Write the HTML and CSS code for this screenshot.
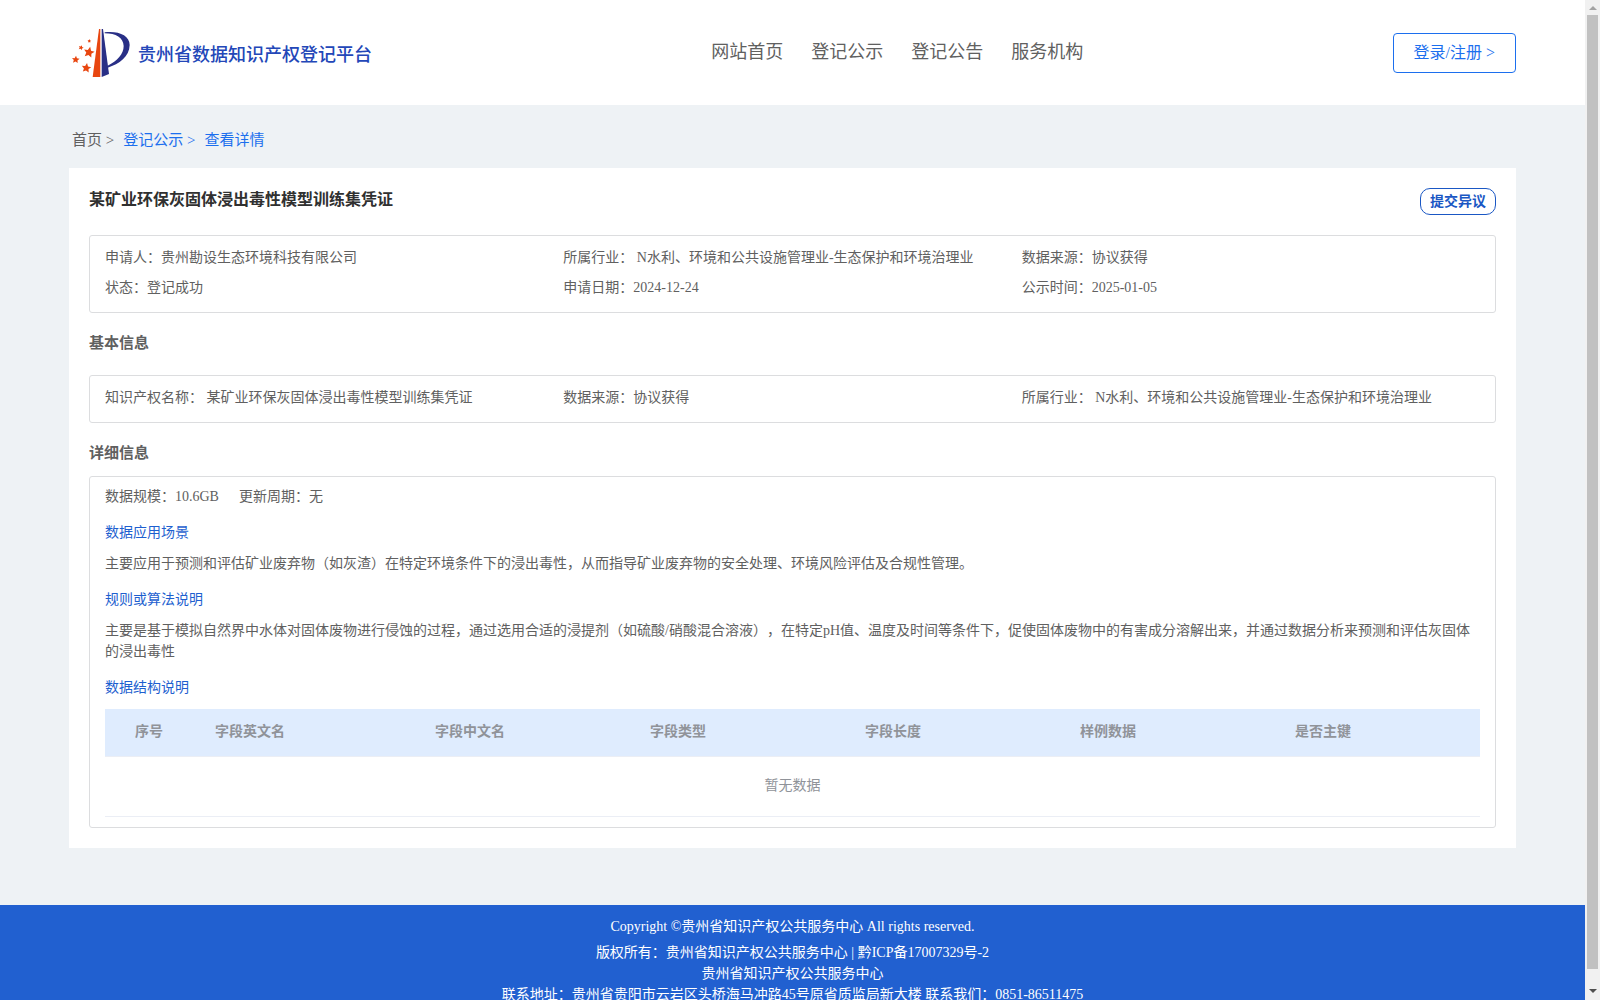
FILE: index.html
```html
<!DOCTYPE html>
<html lang="zh-CN">
<head>
    <meta charset="utf-8">
    <title>贵州省数据知识产权登记平台</title>
    <link rel="stylesheet" href="styles.css">
</head>
<body>
    <div class="page">
        <header class="header">
            <a class="logo" href="#">
                <svg width="58" height="50" viewBox="36 84 174 150" aria-hidden="true">
                    <defs>
                        <polygon id="star" points="0,-10 2.9,-3.6 9.5,-3.1 4.6,1.5 5.9,8.1 0,4.8 -5.9,8.1 -4.6,1.5 -9.5,-3.1 -2.9,-3.6"/>
                    </defs>
                    <g fill="#e84610">
                        <path d="M117 87h4v144H98z"/>
                        <use href="#star" transform="translate(87 157) rotate(12) scale(1.7)"/>
                        <use href="#star" transform="translate(79 204) rotate(8) scale(1.5)"/>
                        <use href="#star" transform="translate(47 179) rotate(5) scale(1.2)"/>
                        <use href="#star" transform="translate(63 143) rotate(20) scale(.8)"/>
                        <use href="#star" transform="translate(88 123) rotate(10) scale(.6)"/>
                    </g>
                    <g fill="#292f86">
                        <path d="M125 87h4l18 135-22 9z"/>
                        <path d="M134 97C175 92 209 106 209 135C208 170 178 192 143 203V197C172 183 191 162 191 138C190 113 168 100 134 100z"/>
                    </g>
                </svg>
                <span>贵州省数据知识产权登记平台</span>
            </a>
            <nav class="nav">
                <a href="#">网站首页</a>
                <a href="#">登记公示</a>
                <a href="#">登记公告</a>
                <a href="#">服务机构</a>
            </nav>
            <button type="button" class="login">登录/注册 &gt;</button>
        </header>

        <main class="main">
            <div class="breadcrumb">
                <a href="#" class="home">首页 &gt;</a>
                <a href="#">登记公示 &gt;</a>
                <a href="#">查看详情</a>
            </div>

            <div class="card">
                <div class="card-top">
                    <h1>某矿业环保灰固体浸出毒性模型训练集凭证</h1>
                    <button type="button" class="objection">提交异议</button>
                </div>

                <div class="box info">
                    <div>申请人：贵州勘设生态环境科技有限公司</div>
                    <div>所属行业： N水利、环境和公共设施管理业-生态保护和环境治理业</div>
                    <div>数据来源：协议获得</div>
                    <div>状态：登记成功</div>
                    <div>申请日期：2024-12-24</div>
                    <div>公示时间：2025-01-05</div>
                </div>

                <h2>基本信息</h2>
                <div class="box info basic">
                    <div>知识产权名称： 某矿业环保灰固体浸出毒性模型训练集凭证</div>
                    <div>数据来源：协议获得</div>
                    <div>所属行业： N水利、环境和公共设施管理业-生态保护和环境治理业</div>
                </div>

                <h2>详细信息</h2>
                <div class="box detail">
                    <div class="scale">
                        <span>数据规模：10.6GB</span>
                        <span>更新周期：无</span>
                    </div>
                    <h3>数据应用场景</h3>
                    <p>主要应用于预测和评估矿业废弃物（如灰渣）在特定环境条件下的浸出毒性，从而指导矿业废弃物的安全处理、环境风险评估及合规性管理。</p>
                    <h3>规则或算法说明</h3>
                    <p>主要是基于模拟自然界中水体对固体废物进行侵蚀的过程，通过选用合适的浸提剂（如硫酸/硝酸混合溶液），在特定pH值、温度及时间等条件下，促使固体废物中的有害成分溶解出来，并通过数据分析来预测和评估灰固体的浸出毒性</p>
                    <h3>数据结构说明</h3>
                    <table>
                        <thead>
                            <tr>
                                <th class="col-index">序号</th>
                                <th class="col-name">字段英文名</th>
                                <th>字段中文名</th>
                                <th>字段类型</th>
                                <th>字段长度</th>
                                <th>样例数据</th>
                                <th class="col-key">是否主键</th>
                            </tr>
                        </thead>
                        <tbody>
                            <tr>
                                <td colspan="7">暂无数据</td>
                            </tr>
                        </tbody>
                    </table>
                </div>
            </div>
        </main>

        <footer class="footer">
            <p class="copyright">Copyright ©贵州省知识产权公共服务中心 All rights reserved.</p>
            <p>版权所有：贵州省知识产权公共服务中心 | 黔ICP备17007329号-2</p>
            <p>贵州省知识产权公共服务中心</p>
            <p>联系地址：贵州省贵阳市云岩区头桥海马冲路45号原省质监局新大楼 联系我们：0851-86511475</p>
        </footer>
    </div>

    <div class="scrollbar" aria-hidden="true">
        <i class="arrow up"></i>
        <i class="thumb"></i>
        <i class="arrow down"></i>
    </div>
</body>
</html>
```
FILE: styles.css
```css
* {
    box-sizing: border-box;
}
body {
    margin: 0;
    display: flex;
    height: 100vh;
    overflow: hidden;
    font-family: "Liberation Serif", "Noto Sans CJK SC", serif;
    font-size: 14px;
    text-spacing-trim: space-all;
    color: #606060;
    background-color: #eef2f5;
}
a {
    color: inherit;
    text-decoration: none;
}
h1, h2, h3, p {
    margin: 0;
}
button {
    font-family: inherit;
    background-color: #fff;
    cursor: pointer;
}
.page {
    flex: 1;
    min-width: 0;
    height: 100%;
    overflow: hidden;
}

/* header */
.header {
    display: flex;
    justify-content: space-between;
    align-items: center;
    height: 105px;
    padding: 0 69px 0 72px;
    background-color: #fff;
}
.logo {
    display: flex;
    align-items: center;
    gap: 8px;
    font-size: 18px;
    font-weight: 500;
    color: #2347b8;
}
.nav {
    display: flex;
    gap: 28px;
    padding-bottom: 6px;
    margin-left: 30px;
    font-size: 18px;
}
.login {
    height: 40px;
    padding: 0 20px 3px;
    border: 1px solid #1c6fee;
    border-radius: 4px;
    font-size: 16px;
    color: #1c6fee;
}

/* content */
.main {
    padding: 0 69px 57px;
}
.breadcrumb {
    display: flex;
    gap: 9px;
    height: 63px;
    padding: 5px 3px 0;
    line-height: 60px;
    font-size: 15px;
    color: #1c6fee;
}
.home {
    color: #606060;
}
.card {
    padding: 20px;
    background-color: #fff;
}
.card-top {
    display: flex;
    justify-content: space-between;
    align-items: flex-start;
    height: 47px;
}
h1 {
    font-size: 16px;
    line-height: 24px;
    color: #303030;
}
.objection {
    height: 27px;
    padding: 0 9px;
    border: 1px solid #1a57c4;
    border-radius: 10px;
    font-size: 14px;
    font-weight: bold;
    line-height: 24px;
    color: #1a57c4;
}
.box {
    border: 1px solid #dcdddf;
    border-radius: 3px;
    padding: 7px 15px 9px;
}
.info {
    display: grid;
    grid-template-columns: repeat(3, 1fr);
    line-height: 30px;
    white-space: nowrap;
}
h2 {
    font-size: 15px;
    line-height: 60px;
}
.basic {
    margin-top: 2px;
}
.basic + h2 {
    height: 53px;
}
.detail {
    padding-bottom: 10px;
}
.scale {
    display: flex;
    gap: 20px;
    line-height: 26px;
}
h3 {
    font-size: 14px;
    font-weight: normal;
    line-height: 20px;
    margin: 13px 0 10px;
    color: #1e5fcf;
}
.detail p {
    line-height: 21px;
    margin-bottom: 16px;
}
table {
    width: 100%;
    margin-top: 11px;
    table-layout: fixed;
    border-collapse: collapse;
    color: #909399;
}
th {
    height: 47px;
    padding: 0 10px 4px;
    text-align: left;
    background-color: #dfecfe;
}
th, td {
    border-bottom: 1px solid #ebeef5;
}
td {
    height: 60px;
    padding: 0 0 4px;
    text-align: center;
}
.col-index {
    width: 100px;
    padding-left: 30px;
}
.col-name {
    width: 220px;
}
.col-key {
    width: 195px;
}

/* footer */
.footer {
    padding-top: 11px;
    text-align: center;
    line-height: 21px;
    color: #fff;
    background-color: #2160d0;
    height: 120px;
}
.copyright {
    margin-bottom: 5px;
}

/* scrollbar */
.scrollbar {
    display: flex;
    flex-direction: column;
    align-items: center;
    width: 15px;
    padding: 6px 0 7px;
    background-color: #f1f1f1;
}
.thumb {
    flex: 1;
    width: 11px;
    margin: 5px 0 20px;
    background-color: #c1c1c1;
}
.arrow {
    border: 4px solid transparent;
}
.up {
    border-top: 0;
    border-bottom-color: #a3a3a3;
}
.down {
    border-bottom: 0;
    border-top-color: #505050;
}
```
